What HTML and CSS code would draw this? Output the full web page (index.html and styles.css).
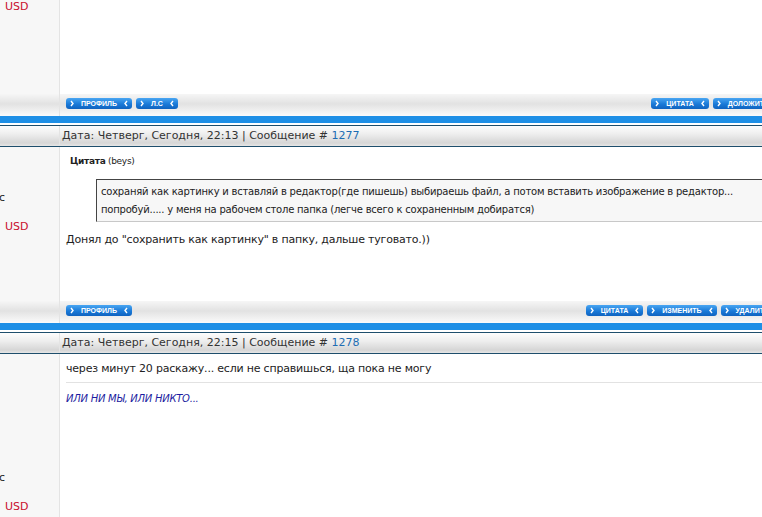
FILE: index.html
```html
<!DOCTYPE html>
<html lang="ru">
<head>
    <meta charset="UTF-8">
    <title>Форум</title>
    <link rel="stylesheet" href="styles.css">
</head>
<body>
    <div class="page">
        <!-- post 1276 tail -->
        <div class="row post post-first">
            <div class="side">
                <div class="cur">USD</div>
            </div>
            <div class="main"></div>
        </div>
        <div class="row actions">
            <div class="side"></div>
            <div class="main bar">
                <div class="group">
                    <a class="btn"><svg viewBox="0 0 4 7"><path d="M1 1 L3 3.5 L1 6"/></svg>ПРОФИЛЬ<svg viewBox="0 0 4 7"><path d="M3 1 L1 3.5 L3 6"/></svg></a>
                    <a class="btn"><svg viewBox="0 0 4 7"><path d="M1 1 L3 3.5 L1 6"/></svg>Л.С<svg viewBox="0 0 4 7"><path d="M3 1 L1 3.5 L3 6"/></svg></a>
                </div>
                <div class="group">
                    <a class="btn"><svg viewBox="0 0 4 7"><path d="M1 1 L3 3.5 L1 6"/></svg>ЦИТАТА<svg viewBox="0 0 4 7"><path d="M3 1 L1 3.5 L3 6"/></svg></a>
                    <a class="btn"><svg viewBox="0 0 4 7"><path d="M1 1 L3 3.5 L1 6"/></svg>ДОЛОЖИТЬ<svg viewBox="0 0 4 7"><path d="M3 1 L1 3.5 L3 6"/></svg></a>
                </div>
            </div>
        </div>
        <div class="sep"></div>

        <!-- post 1277 -->
        <div class="row head">
            <div class="side"></div>
            <div class="main">Дата: Четверг, Сегодня, 22:13 | Сообщение # <a class="num">1277</a></div>
        </div>
        <div class="row post post-second">
            <div class="side">
                <div class="status">с</div>
                <div class="cur">USD</div>
            </div>
            <div class="main body">
                <div class="quote-title"><b>Цитата</b> (beys)</div>
                <div class="quote">сохраняй как картинку и вставляй в редактор(где пишешь) выбираешь файл, а потом вставить изображение в редактор...<br>попробуй..... у меня на рабочем столе папка (легче всего к сохраненным добиратся)</div>
                <p class="text">Донял до "сохранить как картинку" в папку, дальше туговато.))</p>
            </div>
        </div>
        <div class="row actions">
            <div class="side"></div>
            <div class="main bar">
                <div class="group">
                    <a class="btn"><svg viewBox="0 0 4 7"><path d="M1 1 L3 3.5 L1 6"/></svg>ПРОФИЛЬ<svg viewBox="0 0 4 7"><path d="M3 1 L1 3.5 L3 6"/></svg></a>
                </div>
                <div class="group">
                    <a class="btn"><svg viewBox="0 0 4 7"><path d="M1 1 L3 3.5 L1 6"/></svg>ЦИТАТА<svg viewBox="0 0 4 7"><path d="M3 1 L1 3.5 L3 6"/></svg></a>
                    <a class="btn"><svg viewBox="0 0 4 7"><path d="M1 1 L3 3.5 L1 6"/></svg>ИЗМЕНИТЬ<svg viewBox="0 0 4 7"><path d="M3 1 L1 3.5 L3 6"/></svg></a>
                    <a class="btn"><svg viewBox="0 0 4 7"><path d="M1 1 L3 3.5 L1 6"/></svg>УДАЛИТЬ<svg viewBox="0 0 4 7"><path d="M3 1 L1 3.5 L3 6"/></svg></a>
                </div>
            </div>
        </div>
        <div class="sep"></div>

        <!-- post 1278 -->
        <div class="row head">
            <div class="side"></div>
            <div class="main">Дата: Четверг, Сегодня, 22:15 | Сообщение # <a class="num">1278</a></div>
        </div>
        <div class="row post post-third">
            <div class="side">
                <div class="status">с</div>
                <div class="cur">USD</div>
            </div>
            <div class="main body">
                <p class="text">через минут 20 раскажу... если не справишься, ща пока не могу</p>
                <div class="signature">ИЛИ НИ МЫ, ИЛИ НИКТО...</div>
            </div>
        </div>
    </div>
</body>
</html>
```

FILE: styles.css
```css
* {
    margin: 0;
    padding: 0;
    box-sizing: border-box;
}

body {
    font-family: 'DejaVu Sans', sans-serif;
    font-size: 11px;
    color: #222;
    background: #fff;
    overflow: hidden;
}

.page {
    width: 790px;
}

.row {
    display: grid;
    grid-template-columns: 60px 1fr;
}

.side {
    background: #f7f7f7;
    border-right: 1px solid #e4e4e4;
}

/* posts */
.post-first {
    height: 94px;
}

.post-second {
    height: 154px;
}

.post-third {
    height: 170px;
}

.status {
    font-size: 11px;
    line-height: 14px;
    margin: 0 0 15px -1px;
}

.cur {
    color: #c8102e;
    font-size: 11px;
    line-height: 13px;
    margin-left: 5px;
}

.post-second .side {
    padding-top: 44px;
}

.post-third .side {
    padding-top: 117px;
}

.body {
    padding: 6px 0 0 6px;
}

.post-second .body {
    padding-top: 7px;
}

.quote-title {
    font-size: 9px;
    line-height: 14px;
    letter-spacing: -0.3px;
    margin: 0 0 11px 4px;
}

.quote {
    margin-left: 30px;
    padding: 3px 4px 2px 4px;
    background: #f7f7f7;
    border-top: 1px solid #444;
    border-left: 1px solid #444;
    border-bottom: 1px solid #c8c8c8;
    line-height: 18px;
    font-size: 10px;
    letter-spacing: -0.22px;
}

.text {
    line-height: 18px;
    letter-spacing: -0.2px;
}

.post-second .text {
    margin-top: 9px;
}

.post-third .text {
    padding-bottom: 4px;
    border-bottom: 1px solid #e2e2e2;
}

.signature {
    margin-top: 9px;
    font-size: 10px;
    line-height: 13px;
    font-style: italic;
    color: #1c1ca0;
    letter-spacing: -0.25px;
}

/* button bar */
.actions {
    height: 22px;
    background: linear-gradient(#f6f6f6, #e2e2e2 45%, #fbfbfb);
}

.actions .side {
    background: transparent;
}

.bar {
    display: flex;
    justify-content: space-between;
    align-items: flex-start;
    padding: 4px 6px 0;
}

.group {
    display: flex;
    gap: 4px;
}

.btn {
    display: inline-flex;
    align-items: center;
    gap: 7px;
    height: 11px;
    padding: 0 4px;
    border-radius: 3px;
    background: linear-gradient(#4aa6f2, #1a7ad8 55%, #0f63c0);
    color: #fff;
    font-family: 'Liberation Sans', sans-serif;
    font-size: 7px;
    font-weight: bold;
    text-decoration: none;
}

.btn svg {
    width: 4px;
    height: 7px;
    fill: none;
    stroke: #fff;
    stroke-width: 1.4;
}

/* separators and heads */
.sep {
    height: 9px;
    background: linear-gradient(#1e8fe6, #1e8fe6) top / 100% 7px no-repeat, #fff;
}

.head {
    height: 22px;
    border-top: 1px solid #1e4e6c;
    border-bottom: 1px solid #1e4e6c;
    background: linear-gradient(#fdfdfd, #eeeeee 40%, #d6d6d6 85%, #e6e6e6);
    line-height: 20px;
    color: #333;
}

.head .side {
    background: transparent;
}

.head .main {
    padding-left: 2px;
}

.num {
    color: #1d6db3;
    text-decoration: none;
}
```
